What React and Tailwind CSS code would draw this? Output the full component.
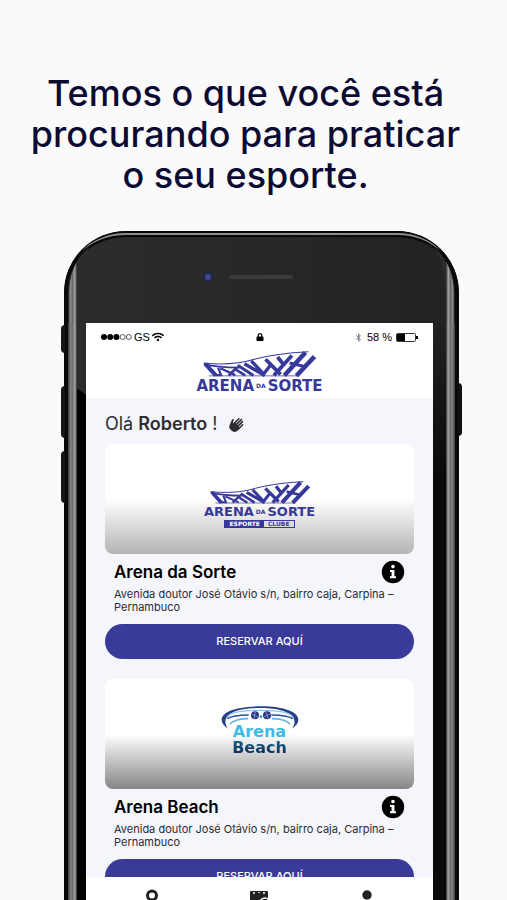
import { FaWifi, FaLock, FaBluetoothB } from 'react-icons/fa';
import { IoHandRight } from 'react-icons/io5';

const ADDRESS = 'Avenida doutor José Otávio s/n, bairro caja, Carpina – Pernambuco';

const StadiumDrawing = ({ className }) => (
  <svg viewBox="0 0 300 68" className={className} fill="none" stroke="#37399a" aria-hidden="true">
    <path d="M2 32 C40 36 90 36 136 22 C180 10 240 4 280 2" strokeWidth="3" />
    <path d="M2 34 C30 42 62 44 98 44" strokeWidth="5" />
    <path d="M6 34 L34 65" strokeWidth="11" />
    <path d="M32 64 H48 L40 44 M46 46 L86 64" strokeWidth="6" />
    <path d="M68 65 L90 44 M82 46 L112 65" strokeWidth="7" />
    <path d="M92 38 L134 65" strokeWidth="8" />
    <path d="M110 34 L164 65 M128 26 L160 60" strokeWidth="9" />
    <path d="M158 65 L182 34" strokeWidth="9" />
    <path d="M166 22 L206 62" strokeWidth="10" />
    <path d="M188 65 L236 12 M198 16 L214 36" strokeWidth="10" />
    <path d="M216 65 L272 4" strokeWidth="12" />
    <path d="M230 32 L272 42" strokeWidth="8" />
    <path d="M248 66 L296 15" strokeWidth="12" />
    <path d="M16 66 H254" strokeWidth="2" />
  </svg>
);

const BeachRings = () => (
  <svg viewBox="0 0 240 84" className="w-20" fill="none" aria-hidden="true">
    <path d="M24 74 C-20 44 12 7 120 7 C228 7 260 44 216 74 C238 44 214 12 120 12 C26 12 2 44 24 74 Z" fill="#2b3f86" />
    <path d="M20 44 C22 27 60 19 120 19 C180 19 218 27 220 44" stroke="#8fc3e4" strokeWidth="4" />
    <path d="M22 44 C36 34 58 33 86 33 M218 44 C204 34 182 33 154 33" stroke="#32508f" strokeWidth="4" />
    <path d="M30 60 C44 46 62 44 84 44 M210 60 C196 46 178 44 156 44" stroke="#63b5e2" strokeWidth="5" />
    <circle cx="105" cy="34" r="12" fill="#27357b" />
    <circle cx="141" cy="34" r="12" fill="#27357b" />
    <path d="M95 30 L114 39 M106 23 L102 45 M132 38 L151 30 M137 23 L145 45" stroke="#a9bfe4" strokeWidth="2" />
    <circle cx="123" cy="38" r="4" fill="#2d86c9" />
  </svg>
);

const InfoIcon = () => (
  <svg viewBox="0 0 24 24" className="size-6" aria-hidden="true">
    <circle cx="12" cy="12" r="11.2" fill="#000" />
    <circle cx="12" cy="6.6" r="1.8" fill="#fff" />
    <path d="M9 10 H13.4 V16.2 H15 V18.2 H9 V16.2 H10.6 V12 H9 Z" fill="#fff" />
  </svg>
);

// Polished edge running round a top corner of the phone
const PhoneCorner = ({ className, id }) => (
  <svg viewBox="0 0 70 92" className={className} fill="none" aria-hidden="true">
    <defs>
      <linearGradient id={id} x1="4" x2="13" y1="0" y2="0" gradientUnits="userSpaceOnUse">
        <stop offset="0" stopColor="#3a3a3a" />
        <stop offset="0.3" stopColor="#8c8c8c" />
        <stop offset="0.5" stopColor="#666" />
        <stop offset="0.75" stopColor="#a4a4a4" />
        <stop offset="1" stopColor="#2b2b2b" />
      </linearGradient>
    </defs>
    <path d="M70 0 H62 C26 0 0 24 0 62 V92 H4 V62 C4 30 26 7 62 6 H70 Z" fill="#090909" />
    <path d="M70 2 H62 C44 2 28 9 18 20 C30 10 44 4 62 4 H70 Z" fill="#8d8d8d" />
    <path d="M5 92 V60 C6 41 13 26 25 16 C17 31 13 45 13 62 V92 Z" fill={`url(#${id})`} />
  </svg>
);

const StatusBar = () => (
  <div className="flex items-center justify-between px-[15px] pt-2 text-[11px] leading-3 text-black">
    <div className="flex flex-1 items-center gap-0.5">
      <svg viewBox="0 0 31 6" className="w-[31px]" aria-hidden="true">
        <circle cx="3" cy="3" r="3" />
        <circle cx="9.2" cy="3" r="3" />
        <circle cx="15.4" cy="3" r="3" />
        <circle cx="21.6" cy="3" r="2.5" fill="none" stroke="#333" strokeWidth="0.8" />
        <circle cx="27.8" cy="3" r="2.5" fill="none" stroke="#333" strokeWidth="0.8" />
      </svg>
      <span className="font-['Liberation_Sans']">GS</span>
      <FaWifi className="size-3" />
    </div>
    <FaLock className="size-2" />
    <div className="flex flex-1 items-center justify-end gap-1">
      <FaBluetoothB className="size-[9px] text-gray-500" />
      <span className="font-['Liberation_Sans']">58 %</span>
      <svg viewBox="0 0 22 9" className="w-[22px]" aria-hidden="true">
        <rect x="0.5" y="0.5" width="19" height="8" rx="1" fill="none" stroke="#333" />
        <rect x="1" y="1" width="8" height="7" />
        <rect x="20" y="3" width="2" height="3" />
      </svg>
    </div>
  </div>
);

const ArenaHeaderLogo = () => (
  <div className="flex flex-col items-center">
    <StadiumDrawing className="w-[113px]" />
    <div className="flex items-center gap-0.5 font-['DejaVu_Sans'] text-[15px] leading-[18px] font-bold text-[#37399a]">
      <span>ARENA</span>
      <span className="text-[6px]">DA</span>
      <span>SORTE</span>
    </div>
  </div>
);

const ArenaCardLogo = () => (
  <div className="flex flex-col items-center pt-3">
    <StadiumDrawing className="w-[100px]" />
    <div className="flex items-center gap-0.5 font-['DejaVu_Sans'] text-[13px] leading-4 font-bold text-[#37399a]">
      <span>ARENA</span>
      <span className="text-[6px]">DA</span>
      <span>SORTE</span>
    </div>
    <div className="flex border border-[#37399a] font-['DejaVu_Sans'] text-[6px] leading-[6px] font-bold">
      <span className="bg-[#37399a] px-1 text-white">ESPORTE</span>
      <span className="px-1 text-[#37399a]">CLUBE</span>
    </div>
  </div>
);

const BeachLogo = () => (
  <div className="flex flex-col items-center pb-2 font-['DejaVu_Sans'] text-base leading-4 font-bold">
    <BeachRings />
    <span className="-mt-2 text-[#3fbbe6]">Arena</span>
    <span className="bg-linear-to-b from-[#12688f] to-[#10224f] bg-clip-text text-transparent">Beach</span>
  </div>
);

const VenueCard = ({ name, cover, logo }) => (
  <article className="mb-5">
    <div className={`flex h-[110px] items-center justify-center rounded-lg ${cover}`}>{logo}</div>
    <div className="px-[9px]">
      <div className="flex items-center justify-between pt-1.5">
        <h2 className="text-[17px] leading-6 font-semibold text-black">{name}</h2>
        <button type="button" aria-label={`Informações sobre ${name}`}>
          <InfoIcon />
        </button>
      </div>
      <p className="mt-1 text-[11px] leading-[13px] text-[#2c2c30]">{ADDRESS}</p>
    </div>
    <button type="button" className="mt-2.5 h-[35px] w-full rounded-full bg-[#393a99] text-[11px] font-medium text-white">
      RESERVAR AQUÍ
    </button>
  </article>
);

const TabBar = () => (
  <nav className="flex h-[23px] shrink-0 items-start justify-around overflow-hidden bg-white px-3 pt-3 text-[#222]">
    <button type="button" aria-label="Arenas">
      <svg viewBox="0 0 20 24" className="w-5">
        <circle cx="10" cy="6.5" r="4.5" fill="none" stroke="currentColor" strokeWidth="3" />
        <path d="M10 11 V20" stroke="currentColor" strokeWidth="3" />
      </svg>
    </button>
    <button type="button" aria-label="Reservas">
      <svg viewBox="0 0 20 24" className="w-5">
        <path d="M2 2 H18 Q19 2 19 3 V20 H1 V3 Q1 2 2 2 Z" fill="currentColor" />
        <path d="M5 3 V5 M10 3 V4 M15 3 V5" stroke="#fff" strokeWidth="1.5" />
        <circle cx="16" cy="14" r="5" fill="currentColor" stroke="#fff" strokeWidth="1.5" />
      </svg>
    </button>
    <button type="button" aria-label="Perfil">
      <svg viewBox="0 0 20 24" className="w-5">
        <circle cx="10" cy="6" r="4.7" fill="currentColor" />
        <path d="M1 22 Q1 13 10 13 Q19 13 19 22 Z" fill="currentColor" />
      </svg>
    </button>
  </nav>
);

const PhoneScreen = () => (
  <div className="flex min-w-0 flex-1 flex-col overflow-hidden bg-[#f5f5fc]">
    <header className="shrink-0 bg-white pb-[3px]">
      <StatusBar />
      <div className="mt-2">
        <ArenaHeaderLogo />
      </div>
    </header>
    <main className="min-h-0 flex-1 overflow-hidden px-[19px] pt-[13px]">
      <h2 className="mb-[7px] flex items-center text-[18px] leading-[26px] text-[#2d2d33]">
        <span>
          Olá <strong className="font-semibold">Roberto</strong> !
        </span>
        <IoHandRight className="ml-2.5 size-4 rotate-45" />
      </h2>
      <VenueCard
        name="Arena da Sorte"
        cover="bg-[linear-gradient(to_bottom,#fff_50%,#b4b4b4)]"
        logo={<ArenaCardLogo />}
      />
      <VenueCard
        name="Arena Beach"
        cover="bg-[linear-gradient(to_bottom,#fff_50%,#868686)]"
        logo={<BeachLogo />}
      />
    </main>
    <TabBar />
  </div>
);

const Phone = () => (
  <div className="relative mr-12 ml-16 flex min-h-0 flex-1 flex-col">
    {/* side keys */}
    <span className="absolute top-[94px] -left-[3px] h-7 w-1 rounded-l-sm bg-[#161616]" />
    <span className="absolute top-[155px] -left-[3px] h-[52px] w-1 rounded-l-sm bg-[#161616]" />
    <span className="absolute top-[220px] -left-[3px] h-[52px] w-1 rounded-l-sm bg-[#161616]" />
    <span className="absolute top-[152px] -right-[3px] h-[53px] w-1 rounded-r-sm bg-[#111]" />

    <div className="relative flex h-[92px] shrink-0 items-center justify-center overflow-hidden rounded-t-[62px] bg-[linear-gradient(to_bottom,#090909_2px,#8d8d8d_2px,#8d8d8d_4px,#090909_4px,#090909_6px,transparent_6px),linear-gradient(to_right,#2c2c2c,#222)]">
      <PhoneCorner id="edgeLeft" className="absolute top-0 left-0 w-[70px]" />
      <PhoneCorner id="edgeRight" className="absolute top-0 right-0 w-[70px] -scale-x-100" />
      <span className="mr-4 size-2.5 rounded-full border-2 border-[#20264d] bg-[#3a4a8c]" />
      <span className="mr-7 h-1 w-16 rounded-full bg-[#3b3b3b]" />
    </div>

    <div className="flex min-h-0 flex-1">
      <div className="w-[22px] shrink-0 bg-[linear-gradient(to_right,#090909_4px,#3a3a3a_4px,#8c8c8c_7px,#666_8px,#a4a4a4_11px,#2b2b2b_13px,transparent_13px),linear-gradient(212deg,#2b2b2b_60px,#000_61px)]" />
      <PhoneScreen />
      <div className="w-[26px] shrink-0 bg-[linear-gradient(to_left,#090909_4px,#3a3a3a_4px,#8c8c8c_7px,#666_8px,#a4a4a4_11px,#2b2b2b_13px,transparent_13px),linear-gradient(to_bottom,#222,#0a0a0a_150px)]" />
    </div>
  </div>
);

const App = () => {
  return (
    <div className="flex h-screen flex-col overflow-hidden bg-[#fafafa] font-['Inter',sans-serif]">
      <h1 className="mx-auto max-w-[460px] shrink-0 pt-[73px] pr-4 pb-[35px] text-center text-[36px] leading-[41px] font-medium text-[#0b0a33]">
        Temos o que você está procurando para praticar o seu esporte.
      </h1>
      <Phone />
    </div>
  );
};

export default App;
